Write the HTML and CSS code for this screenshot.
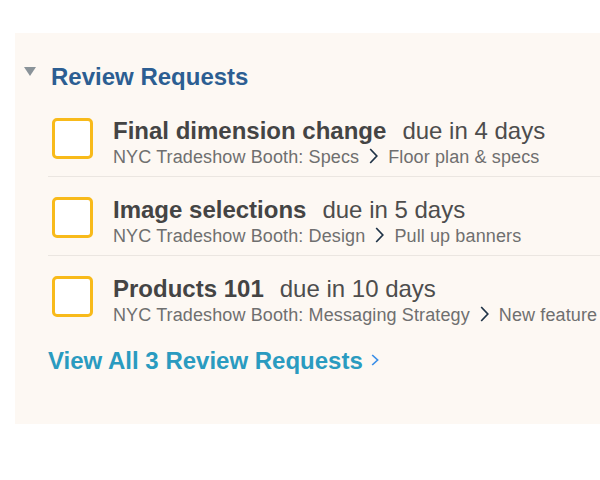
FILE: index.html
```html
<!DOCTYPE html>
<html>
<head>
<meta charset="utf-8">
<link rel="stylesheet" href="styles.css">
</head>
<body>
<section class="panel">
  <header class="panel-head">
    <span class="caret"></span>
    <h2 class="panel-title">Review Requests</h2>
  </header>
  <ul class="list">
    <li class="item">
      <span class="check"></span>
      <div class="info">
        <div class="line1"><span class="name">Final dimension change</span><span class="due">due in 4 days</span></div>
        <div class="line2">NYC Tradeshow Booth: Specs<svg class="sep" viewBox="0 0 9 16" width="9" height="16"><path d="M1.2 1 L7.8 8 L1.2 15" fill="none" stroke="#1f3347" stroke-width="1.7"/></svg>Floor plan &amp; specs</div>
      </div>
    </li>
    <li class="item">
      <span class="check"></span>
      <div class="info">
        <div class="line1"><span class="name">Image selections</span><span class="due">due in 5 days</span></div>
        <div class="line2">NYC Tradeshow Booth: Design<svg class="sep" viewBox="0 0 9 16" width="9" height="16"><path d="M1.2 1 L7.8 8 L1.2 15" fill="none" stroke="#1f3347" stroke-width="1.7"/></svg>Pull up banners</div>
      </div>
    </li>
    <li class="item last">
      <span class="check"></span>
      <div class="info">
        <div class="line1"><span class="name">Products 101</span><span class="due">due in 10 days</span></div>
        <div class="line2">NYC Tradeshow Booth: Messaging Strategy<svg class="sep" viewBox="0 0 9 16" width="9" height="16"><path d="M1.2 1 L7.8 8 L1.2 15" fill="none" stroke="#1f3347" stroke-width="1.7"/></svg>New feature</div>
      </div>
    </li>
  </ul>
  <a class="view-all" href="#">View All 3 Review Requests<svg class="more" viewBox="0 0 8 12" width="8" height="12"><path d="M1.2 1 L6.6 6 L1.2 11" fill="none" stroke="#3b8fe8" stroke-width="1.7"/></svg></a>
</section>
</body>
</html>
```

FILE: styles.css
```css
html, body {
  margin: 0;
  padding: 0;
  background: #ffffff;
}
body {
  font-family: "Liberation Sans", Arial, sans-serif;
  overflow: hidden;
}
.panel {
  margin: 33px 0 0 15px;
  width: 600px;
  height: 391px;
  background: #fdf8f3;
  padding: 30px 0 0 0;
  box-sizing: border-box;
  overflow: hidden;
}
.panel-head {
  display: flex;
  align-items: flex-start;
  padding-left: 9px;
}
.caret {
  flex: none;
  width: 0;
  height: 0;
  border-left: 6.5px solid transparent;
  border-right: 6.5px solid transparent;
  border-top: 9px solid #8a9399;
  margin-top: 4px;
  margin-right: 15px;
}
.panel-title {
  margin: 0;
  font-size: 24px;
  line-height: 28px;
  font-weight: bold;
  color: #2c5e92;
}
.list {
  list-style: none;
  margin: 7px 0 0 33px;
  padding: 0;
}
.item {
  display: flex;
  align-items: flex-start;
  padding: 19px 0 8px 4px;
  border-bottom: 1px solid #ebe6e1;
}
.item.last {
  border-bottom: none;
}
.check {
  flex: none;
  width: 35px;
  height: 35px;
  border: 3px solid #f8ba1a;
  border-radius: 5px;
  background: #ffffff;
  margin-top: 1px;
  margin-right: 20px;
}
.info {
  white-space: nowrap;
}
.line1 {
  font-size: 24px;
  line-height: 28px;
  color: #444444;
}
.name {
  font-weight: bold;
  margin-right: 16px;
}
.due {
  color: #4d4d4d;
}
.line2 {
  margin-top: 1px;
  font-size: 18px;
  line-height: 22px;
  letter-spacing: 0.12px;
  color: #6f6f6f;
  display: flex;
  align-items: center;
}
.sep {
  flex: none;
  margin: -3px 10px 0 10px;
}
.view-all {
  display: inline-flex;
  align-items: center;
  margin: 13px 0 0 33px;
  font-size: 24px;
  font-weight: bold;
  color: #2a9bc0;
  text-decoration: none;
  line-height: 28px;
}
.more {
  flex: none;
  margin-left: 8px;
  margin-top: -2px;
}
```
